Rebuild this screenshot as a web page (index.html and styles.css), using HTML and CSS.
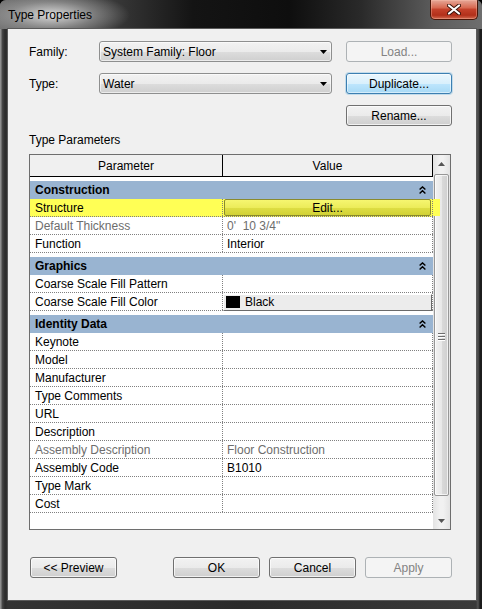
FILE: index.html
```html
<!DOCTYPE html>
<html lang="en">
<head>
    <meta charset="UTF-8">
    <meta name="viewport" content="width=device-width, initial-scale=1.0">
    <title>Type Properties</title>
    <link rel="stylesheet" href="styles.css">
</head>
<body>
    <div class="window">
        <div class="titlebar">
            <span class="title">Type Properties</span>
            <div class="close-btn">
                <svg width="14" height="11" viewBox="0 0 14 11">
                    <path d="M2 1.5 L12 9.5 M12 1.5 L2 9.5" stroke="#3a1208" stroke-width="4" stroke-linecap="round"/>
                    <path d="M2 1.5 L12 9.5 M12 1.5 L2 9.5" stroke="#fff" stroke-width="2.2" stroke-linecap="round"/>
                </svg>
            </div>
        </div>

        <div class="client">
            <div class="type-form">
                <span class="form-label">Family:</span>
                <div class="combo">
                    <span>System Family: Floor</span>
                    <svg width="7" height="4" viewBox="0 0 7 4"><path d="M0 0h7L3.5 4z" fill="#000"/></svg>
                </div>
                <button class="btn" disabled>Load...</button>

                <span class="form-label">Type:</span>
                <div class="combo">
                    <span>Water</span>
                    <svg width="7" height="4" viewBox="0 0 7 4"><path d="M0 0h7L3.5 4z" fill="#000"/></svg>
                </div>
                <button class="btn btn-default">Duplicate...</button>

                <button class="btn btn-rename">Rename...</button>
            </div>

            <div class="section-title">Type Parameters</div>

            <div class="param-grid">
                <div class="rows">
                    <div class="head">
                        <div class="head-cell col-name">Parameter</div>
                        <div class="head-cell col-value">Value</div>
                    </div>

                    <div class="group">
                        <div class="group-band">Construction
                            <svg width="7" height="8" viewBox="0 0 7 8"><path d="M0.6 3.6 L3.5 0.9 L6.4 3.6 M0.6 7.4 L3.5 4.7 L6.4 7.4" fill="none" stroke="#000" stroke-width="1.4"/></svg>
                        </div>
                    </div>
                    <div class="row highlight">
                        <div class="cell col-name">Structure</div>
                        <div class="cell col-value"><div class="edit-btn">Edit...</div></div>
                    </div>
                    <div class="row muted">
                        <div class="cell col-name">Default Thickness</div>
                        <div class="cell col-value">0'&nbsp; 10 3/4"</div>
                    </div>
                    <div class="row">
                        <div class="cell col-name">Function</div>
                        <div class="cell col-value">Interior</div>
                    </div>

                    <div class="group">
                        <div class="group-band">Graphics
                            <svg width="7" height="8" viewBox="0 0 7 8"><path d="M0.6 3.6 L3.5 0.9 L6.4 3.6 M0.6 7.4 L3.5 4.7 L6.4 7.4" fill="none" stroke="#000" stroke-width="1.4"/></svg>
                        </div>
                    </div>
                    <div class="row">
                        <div class="cell col-name">Coarse Scale Fill Pattern</div>
                        <div class="cell col-value"></div>
                    </div>
                    <div class="row">
                        <div class="cell col-name">Coarse Scale Fill Color</div>
                        <div class="cell col-value"><div class="color-btn"><span class="swatch"></span>Black</div></div>
                    </div>

                    <div class="group">
                        <div class="group-band">Identity Data
                            <svg width="7" height="8" viewBox="0 0 7 8"><path d="M0.6 3.6 L3.5 0.9 L6.4 3.6 M0.6 7.4 L3.5 4.7 L6.4 7.4" fill="none" stroke="#000" stroke-width="1.4"/></svg>
                        </div>
                    </div>
                    <div class="row"><div class="cell col-name">Keynote</div><div class="cell col-value"></div></div>
                    <div class="row"><div class="cell col-name">Model</div><div class="cell col-value"></div></div>
                    <div class="row"><div class="cell col-name">Manufacturer</div><div class="cell col-value"></div></div>
                    <div class="row"><div class="cell col-name">Type Comments</div><div class="cell col-value"></div></div>
                    <div class="row"><div class="cell col-name">URL</div><div class="cell col-value"></div></div>
                    <div class="row"><div class="cell col-name">Description</div><div class="cell col-value"></div></div>
                    <div class="row muted"><div class="cell col-name">Assembly Description</div><div class="cell col-value">Floor Construction</div></div>
                    <div class="row"><div class="cell col-name">Assembly Code</div><div class="cell col-value">B1010</div></div>
                    <div class="row"><div class="cell col-name">Type Mark</div><div class="cell col-value"></div></div>
                    <div class="row"><div class="cell col-name">Cost</div><div class="cell col-value"></div></div>
                </div>

                <div class="scrollbar">
                    <div class="scroll-arrow">
                        <svg width="7" height="4" viewBox="0 0 7 4"><path d="M0 4h7L3.5 0z" fill="#555"/></svg>
                    </div>
                    <div class="scroll-track">
                        <div class="scroll-thumb">
                            <div class="grip"><span></span><span></span><span></span></div>
                        </div>
                    </div>
                    <div class="scroll-arrow">
                        <svg width="7" height="4" viewBox="0 0 7 4"><path d="M0 0h7L3.5 4z" fill="#555"/></svg>
                    </div>
                </div>
            </div>

            <div class="dialog-buttons">
                <button class="btn btn-wide btn-preview">&lt;&lt; Preview</button>
                <div class="button-group">
                    <button class="btn btn-wide">OK</button>
                    <button class="btn btn-wide">Cancel</button>
                    <button class="btn btn-wide" disabled>Apply</button>
                </div>
            </div>
        </div>
    </div>
</body>
</html>
```

FILE: styles.css
```css
body {
    margin: 0;
    background-color: #000;
    font-family: "Liberation Sans", Arial, sans-serif;
    font-size: 12px;
    color: #000;
}

.window {
    width: 482px;
    height: 609px;
    box-sizing: border-box;
    display: flex;
    flex-direction: column;
    padding-bottom: 9px;
    border-radius: 6px 6px 0 0;
    overflow: hidden;
    background: linear-gradient(to right, #8e8e8e 0, #8e8e8e 1px, #4a4a4a 2px, #2c2c2c 5px, #333 8px, #2a2a2a 50%, #3a3a3a 476px, #555 478px, #1c1c1c 480px);
}

.titlebar {
    height: 29px;
    flex-shrink: 0;
    display: flex;
    justify-content: space-between;
    align-items: flex-start;
    padding-left: 8px;
    background:
        radial-gradient(ellipse 78px 24px at 52px 15px, rgba(225, 225, 225, 0.95), rgba(170, 170, 170, 0.55) 55%, rgba(120, 120, 120, 0) 100%),
        linear-gradient(to right, #6a6a6a 0, #3c3c3c 22%, #141414 40%, #0e0e0e 60%, #2a2a2a 75%, #5c5c5c 90%, #6e6e6e 100%);
}

.title {
    padding-top: 8px;
    font-size: 12px;
    line-height: 15px;
}

.close-btn {
    width: 46px;
    height: 19px;
    margin-right: 4px;
    display: flex;
    align-items: center;
    justify-content: center;
    border: 1px solid #4a1608;
    border-top: none;
    border-radius: 0 0 5px 5px;
    background: linear-gradient(#e6a898 0, #d86a52 40%, #c4412a 50%, #b2301a 80%, #d26a50 100%);
    box-shadow: inset 0 0 0 1px rgba(255, 200, 180, 0.35);
}

.client {
    flex: 1;
    margin: 0 6px 0 8px;
    padding: 12px 24px 0 21px;
    background-color: #f0f0f0;
    box-shadow: 0 0 0 1px #5a5a5a;
}

.type-form {
    display: grid;
    grid-template-columns: 56px 233px 106px;
    grid-auto-rows: 21px;
    column-gap: 14px;
    row-gap: 11px;
    align-items: center;
}

.btn-rename {
    grid-column: 3;
}

.combo {
    height: 21px;
    box-sizing: border-box;
    display: flex;
    align-items: center;
    justify-content: space-between;
    padding: 0 4px 0 3px;
    border: 1px solid #8e8f8f;
    border-radius: 3px;
    background: linear-gradient(#f2f2f2 0, #ebebeb 50%, #dddddd 51%, #cfcfcf 100%);
    box-shadow: inset 0 0 0 1px rgba(255, 255, 255, 0.6);
}

.btn {
    height: 21px;
    box-sizing: border-box;
    padding: 0;
    font-family: inherit;
    font-size: 12px;
    color: #000;
    border: 1px solid #707070;
    border-radius: 3px;
    background: linear-gradient(#f2f2f2 0, #ebebeb 50%, #dddddd 51%, #cfcfcf 100%);
    box-shadow: inset 0 0 0 1px rgba(255, 255, 255, 0.7);
}

.btn:disabled {
    color: #838383;
    border-color: #adb2b5;
    background: #f4f4f4;
    box-shadow: none;
}

.btn-default {
    border-color: #3c7fb1;
    background: linear-gradient(#eaf6fd 0, #d9f0fc 50%, #bee6fd 51%, #a7d9f5 100%);
    box-shadow: inset 0 0 0 1px rgba(255, 255, 255, 0.5), 0 0 0 1px rgba(60, 160, 220, 0.25);
}

.section-title {
    margin-top: 7px;
    line-height: 15px;
}

.param-grid {
    margin-top: 6px;
    width: 422px;
    height: 376px;
    box-sizing: border-box;
    display: flex;
    border: 1px solid #6e6e6e;
    background-color: #fff;
}

.rows {
    width: 403px;
}

.head {
    display: flex;
    height: 22px;
}

.head-cell {
    box-sizing: border-box;
    display: flex;
    align-items: center;
    justify-content: center;
    background-color: #f0f0f0;
    border-right: 1px solid #000;
    border-bottom: 1px solid #000;
}

.col-name {
    width: 193px;
    flex-shrink: 0;
}

.col-value {
    width: 210px;
    flex-shrink: 0;
}

.group {
    padding-top: 4px;
}

.group-band {
    height: 18px;
    display: flex;
    align-items: center;
    justify-content: space-between;
    padding: 0 7px 0 5px;
    background-color: #99b4d1;
    font-weight: bold;
}

.row {
    display: flex;
    height: 18px;
    box-sizing: border-box;
    border-bottom: 1px dotted #808080;
    position: relative;
}

.cell {
    box-sizing: border-box;
    display: flex;
    align-items: center;
    border-right: 1px dotted #808080;
    white-space: nowrap;
}

.cell.col-name {
    padding-left: 5px;
}

.cell.col-value {
    padding-left: 4px;
}

.row.muted {
    color: #6d6d6d;
}

.row.highlight {
    background-color: #ffff55;
}

/* marker highlight runs a little past the grid */
.row.highlight::after {
    content: '';
    position: absolute;
    left: 100%;
    top: 0;
    width: 7px;
    height: 17px;
    background-color: #ffff55;
}

.edit-btn {
    flex: 1;
    height: 15px;
    margin: 0 1px 0 -3px;
    display: flex;
    align-items: center;
    justify-content: center;
    border: 1px solid #8a8a2c;
    border-radius: 2px;
    background: linear-gradient(#f6f670 0, #ecec5a 50%, #dede44 51%, #d2d236 100%);
}

.color-btn {
    flex: 1;
    height: 17px;
    box-sizing: border-box;
    margin: 0 0 -1px -4px;
    display: flex;
    align-items: center;
    border: 1px solid;
    border-color: #fff #6a6a6a #6a6a6a #fff;
    background-color: #ececec;
}

.swatch {
    width: 14px;
    height: 12px;
    margin: 0 5px 0 2px;
    background-color: #000;
}

.scrollbar {
    width: 17px;
    display: flex;
    flex-direction: column;
    background: linear-gradient(to right, #e3e3e3, #f1f1f1 40%, #f1f1f1 60%, #e3e3e3);
}

.scroll-arrow {
    height: 17px;
    display: flex;
    align-items: center;
    justify-content: center;
}

.scroll-track {
    flex: 1;
    padding: 2px 1px 0;
}

.scroll-thumb {
    height: 322px;
    box-sizing: border-box;
    display: flex;
    align-items: center;
    justify-content: center;
    border: 1px solid #979797;
    border-radius: 2px;
    background: linear-gradient(to right, #f3f3f3 0, #e8e8e8 50%, #dadada 51%, #cfcfcf 100%);
    box-shadow: inset 0 0 0 1px rgba(255, 255, 255, 0.7);
}

.grip {
    display: flex;
    flex-direction: column;
    gap: 1px;
    margin-top: 4px;
}

.grip span {
    width: 7px;
    height: 1px;
    background-color: #6f6f6f;
    border-bottom: 1px solid #fff;
}

.dialog-buttons {
    margin-top: 27px;
    display: flex;
    justify-content: space-between;
}

.button-group {
    display: flex;
    gap: 9px;
}

.btn-wide {
    width: 87px;
}

.btn-preview {
    margin-left: 1px;
}
```
